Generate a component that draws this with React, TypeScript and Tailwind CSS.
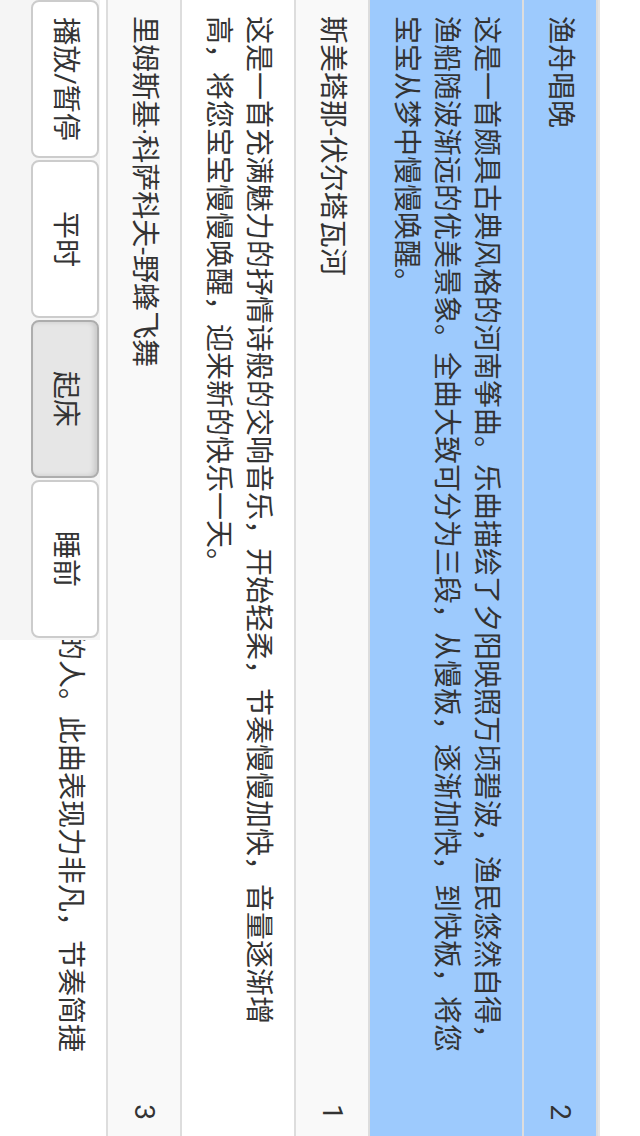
const songs = [
  {
    id: 2,
    name: "渔舟唱晚",
    desc: "这是一首颇具古典风格的河南筝曲。乐曲描绘了夕阳映照万顷碧波，渔民悠然自得，渔船随波渐远的优美景象。全曲大致可分为三段，从慢板，逐渐加快，到快板，将您宝宝从梦中慢慢唤醒。",
    active: true,
  },
  {
    id: 1,
    name: "斯美塔那-伏尔塔瓦河",
    desc: "这是一首充满魅力的抒情诗般的交响音乐，开始轻柔，节奏慢慢加快，音量逐渐增高，将您宝宝慢慢唤醒，迎来新的快乐一天。",
    active: false,
  },
  {
    id: 3,
    name: "里姆斯基·科萨科夫-野蜂飞舞",
    desc: "这首乐曲描绘了一群野蜂嗡嗡飞舞，追赶惊慌失措的人。此曲表现力非凡，节奏简捷",
    active: false,
  },
];

const modes = ["播放/暂停", "平时", "起床", "睡前"];

function SongRow({ song }: { song: (typeof songs)[number] }) {
  const bg = song.active ? "bg-[#9dcafd]" : "bg-[#f9f9f9]";
  const descBg = song.active ? "bg-[#9dcafd]" : "bg-white";
  return (
    <>
      <div className={`flex items-start justify-between border-t-2 border-[#ddd] px-4 py-4 ${bg}`}>
        <span>{song.name}</span>
        <span>{song.id}</span>
      </div>
      <div className={`border-t-2 border-[#ddd] py-4 pl-4 pr-[80px] ${descBg}`}>
        {song.desc}
      </div>
    </>
  );
}

export default function App() {
  return (
    <div className="h-[1136px] w-[640px] overflow-hidden bg-white">
      <div
        className="relative h-[640px] w-[1136px] origin-top-left translate-x-[640px] rotate-90 overflow-hidden bg-white text-[28px] leading-[40px] text-[#333]"
        style={{ fontFamily: "Roboto, 'Noto Sans CJK SC', sans-serif" }}
      >
        <div className="pt-[40px]">
          <div className="border-t-2 border-[#e5e5e5]">
            {songs.map((s) => (
              <SongRow key={s.id} song={s} />
            ))}
          </div>
        </div>

        <div className="absolute bottom-0 left-0 flex h-[100px] w-[640px] items-start gap-[2px] bg-[#f5f5f5] pt-px">
          {modes.map((m) => (
            <button
              key={m}
              className={`flex h-[68px] w-[158px] items-center justify-center rounded-lg border-2 ${
                m === "起床"
                  ? "border-[#adadad] bg-[#e6e6e6] shadow-[inset_0_3px_5px_rgba(0,0,0,0.125)]"
                  : "border-[#ccc] bg-white"
              }`}
            >
              {m}
            </button>
          ))}
        </div>
      </div>
    </div>
  );
}
